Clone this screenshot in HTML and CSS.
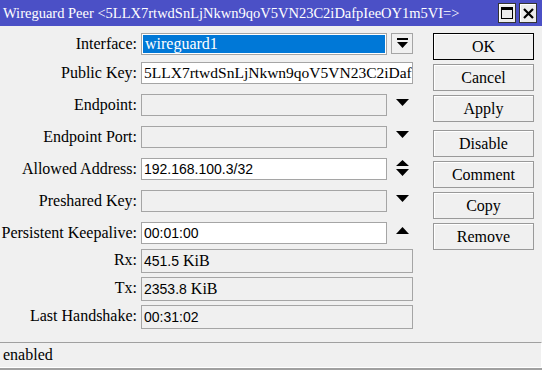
FILE: index.html
```html
<!DOCTYPE html>
<html lang="en">
<head>
  <meta charset="UTF-8">
  <title>Wireguard Peer</title>
  <link rel="stylesheet" href="styles.css">
</head>
<body>
  <div class="window">
    <div class="titlebar">
      <span class="title">Wireguard Peer &lt;5LLX7rtwdSnLjNkwn9qoV5VN23C2iDafpIeeOY1m5VI=&gt;</span>
      <div class="tb-buttons">
        <span class="tb-btn"><svg width="12" height="12" viewBox="0 0 12 12"><rect x="0.5" y="0.5" width="11" height="11" fill="none" stroke="#000"/><rect x="0" y="0" width="12" height="3" fill="#000"/></svg></span>
        <span class="tb-btn"><svg width="11" height="11" viewBox="0 0 11 11"><path d="M1 1 L10 10 M10 1 L1 10" stroke="#000" stroke-width="2.2"/></svg></span>
      </div>
    </div>

    <div class="main">
      <div class="form">
        <div class="row">
          <label>Interface:</label>
          <div class="field selected">wireguard1</div>
          <span class="ctl"><span class="dropbtn"><svg width="11" height="11" viewBox="0 0 11 11"><rect x="0" y="0" width="11" height="2" fill="#000"/><path d="M0 4 H11 L5.5 10 Z" fill="#000"/></svg></span></span>
        </div>
        <div class="row gap7">
          <label>Public Key:</label>
          <div class="field wide key">5LLX7rtwdSnLjNkwn9qoV5VN23C2iDaf</div>
        </div>
        <div class="row">
          <label>Endpoint:</label>
          <div class="field empty"></div>
          <span class="ctl arrow"><svg width="13" height="7" viewBox="0 0 13 7"><path d="M0 0 H13 L6.5 7 Z" fill="#000"/></svg></span>
        </div>
        <div class="row">
          <label>Endpoint Port:</label>
          <div class="field empty"></div>
          <span class="ctl arrow"><svg width="13" height="7" viewBox="0 0 13 7"><path d="M0 0 H13 L6.5 7 Z" fill="#000"/></svg></span>
        </div>
        <div class="row">
          <label>Allowed Address:</label>
          <div class="field"><span class="num">192.168.100.3/32</span></div>
          <span class="ctl arrow updown"><svg width="13" height="16" viewBox="0 0 13 16"><path d="M6.5 0 L13 6 H0 Z M0 9 H13 L6.5 16 Z" fill="#000"/></svg></span>
        </div>
        <div class="row">
          <label>Preshared Key:</label>
          <div class="field empty"></div>
          <span class="ctl arrow"><svg width="13" height="7" viewBox="0 0 13 7"><path d="M0 0 H13 L6.5 7 Z" fill="#000"/></svg></span>
        </div>
        <div class="row">
          <label>Persistent Keepalive:</label>
          <div class="field"><span class="num">00:01:00</span></div>
          <span class="ctl arrow"><svg width="13" height="7" viewBox="0 0 13 7"><path d="M6.5 0 L13 7 H0 Z" fill="#000"/></svg></span>
        </div>
        <div class="row ro first-ro">
          <label>Rx:</label>
          <div class="field wide readonly"><span class="num">451.5</span> KiB</div>
        </div>
        <div class="row ro">
          <label>Tx:</label>
          <div class="field wide readonly"><span class="num">2353.8</span> KiB</div>
        </div>
        <div class="row ro">
          <label>Last Handshake:</label>
          <div class="field wide readonly"><span class="num">00:31:02</span></div>
        </div>
      </div>

      <div class="buttons">
        <button class="default">OK</button>
        <button>Cancel</button>
        <button>Apply</button>
        <button class="sep">Disable</button>
        <button>Comment</button>
        <button>Copy</button>
        <button>Remove</button>
      </div>
    </div>

    <div class="status">enabled</div>
  </div>
</body>
</html>
```

FILE: styles.css
```css
body { margin: 0; background: #f0f0f0; font-family: "Liberation Serif", "DejaVu Serif", serif; font-size: 16px; color: #000; }
.window { width: 542px; height: 370px; display: flex; flex-direction: column; overflow: hidden; }

.titlebar { height: 26px; background: #4b50c6; display: flex; align-items: center; justify-content: space-between; padding: 0 5px 0 3px; }
.title { color: #fff; white-space: nowrap; font-size: 14.5px; }
.tb-buttons { display: flex; gap: 3px; }
.tb-btn { width: 16px; height: 18px; background: #ececec; border: 1px solid #333; box-shadow: inset 1px 1px 0 #fff; display: flex; align-items: center; justify-content: center; }

.main { flex: 1; display: flex; gap: 20px; padding-top: 7px; }
.form { width: 413px; display: flex; flex-direction: column; }
.row { display: grid; grid-template-columns: 141px 246px 26px; height: 22px; margin-top: 10px; }
.row:first-child { margin-top: 0; }
.row.gap7 { margin-top: 7px; }
.row.ro { height: 24px; margin-top: 4px; }
.row.ro.first-ro { margin-top: 5px; }
.row label { text-align: right; padding-right: 4px; line-height: 22px; white-space: nowrap; }

.field { border: 1px solid #a5a5a5; background: #fff; padding: 0 2px; line-height: 20px; white-space: nowrap; overflow: hidden; }
.field.wide { grid-column: 2 / 4; }
.field.key { font-size: 15.5px; }
.field.empty, .field.readonly { background: #f0f0f0; }
.field.readonly { line-height: 22px; }
.field.selected { background: #0078d7; color: #fff; box-shadow: inset 0 0 0 1px #fff; padding: 0 3px; }
.num { font-family: "Liberation Sans", Arial, sans-serif; font-size: 14px; }

.ctl { display: flex; justify-content: center; padding-left: 4px; }
.ctl.arrow { align-items: flex-start; padding-top: 5px; }
.ctl.updown { padding-top: 2px; }
.dropbtn { width: 20px; height: 19px; border: 1px solid #a5a5a5; background: #f0f0f0; display: flex; align-items: center; justify-content: center; }

.buttons { width: 101px; display: flex; flex-direction: column; gap: 4px; }
.buttons button { height: 27px; padding: 0; line-height: 24px; background: #f0f0f0; border: 1px solid #999; box-shadow: inset 1px 1px 0 #fff; font-family: inherit; font-size: 16px; color: #000; }
.buttons button.default { border-color: #000; }
.buttons button.sep { margin-top: 4px; }

.status { height: 24px; border-top: 1px solid #a0a0a0; border-right: 1px solid #fff; border-bottom: 1px solid #fff; box-shadow: 0 2px 0 #a0a0a0; padding-left: 3px; line-height: 24px; margin-bottom: 2px; }
```
